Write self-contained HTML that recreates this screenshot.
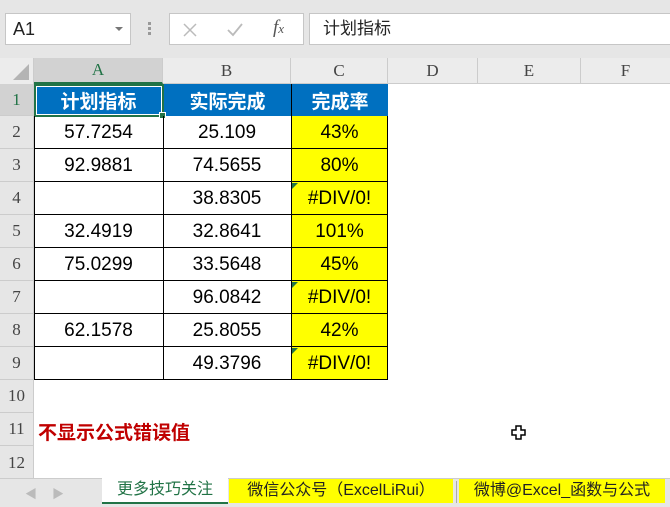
<!DOCTYPE html>
<html><head><meta charset="utf-8"><style>
*{margin:0;padding:0;box-sizing:border-box}
body{width:670px;height:507px;overflow:hidden;background:#fff;position:relative;font-family:"Liberation Sans","Noto Sans CJK SC",sans-serif}
.a{position:absolute}
.top{left:0;top:0;width:670px;height:58px;background:#e6e6e6}
.box{background:#fff;border:1px solid #c6c6c6}
.hdr{background:#e6e6e6;color:#444;font-family:"Liberation Serif","Noto Serif CJK SC",serif;font-size:17px;display:flex;align-items:center;justify-content:center}
.c{display:flex;align-items:center;justify-content:center;font-size:19px;color:#000}
</style></head><body>
<div class="a top"></div>
<div class="a box" style="left:5px;top:13px;width:126px;height:32px;font-size:18px;padding:5px 0 0 7px;color:#222">A1<span class="a" style="right:7px;top:13px;width:0;height:0;border-left:4px solid transparent;border-right:4px solid transparent;border-top:4px solid #777"></span></div>
<div class="a" style="left:148px;top:22px;width:3px;height:3px;background:#999;box-shadow:0 5px #999,0 10px #999"></div>
<div class="a box" style="left:169px;top:13px;width:135px;height:32px">
<svg class="a" style="left:12px;top:8px" width="16" height="16"><path d="M2 2L14 14M14 2L2 14" stroke="#bbb" stroke-width="1.5"/></svg>
<svg class="a" style="left:56px;top:8px" width="18" height="16"><path d="M2 8L7 13L16 2" stroke="#bbb" stroke-width="1.8" fill="none"/></svg>
<span class="a" style="left:103px;top:3px;color:#555;font-family:'Liberation Serif',serif;font-style:italic;font-size:19px">f<span style="font-size:13px">x</span></span></div>
<div class="a box" style="left:309px;top:13px;width:365px;height:32px;font-size:17px;padding:3px 0 0 13px;color:#222;line-height:24px">计划指标</div>

<div class="a" style="left:0;top:58px;width:670px;height:26px;background:#ececec;border-bottom:1px solid #ccc"></div>
<div class="a" style="left:0;top:58px;width:34px;height:26px;background:#ececec;border-right:1px solid #ccc"></div>
<div class="a" style="left:13px;top:64px;width:0;height:0;border-left:16px solid transparent;border-bottom:16px solid #b4b4b4"></div>
<div class="a hdr" style="left:34px;top:58px;width:129px;height:26px;background:#d2d2d2;color:#217346;border-right:1px solid #ccc;border-bottom:2px solid #217346">A</div>
<div class="a hdr" style="left:163px;top:58px;width:128px;height:25px;border-right:1px solid #ccc;background:#ececec">B</div>
<div class="a hdr" style="left:291px;top:58px;width:97px;height:25px;border-right:1px solid #ccc;background:#ececec">C</div>
<div class="a hdr" style="left:388px;top:58px;width:90px;height:25px;border-right:1px solid #ccc;background:#ececec">D</div>
<div class="a hdr" style="left:478px;top:58px;width:103px;height:25px;border-right:1px solid #ccc;background:#ececec">E</div>
<div class="a hdr" style="left:581px;top:58px;width:89px;height:25px;background:#ececec">F</div>

<div class="a" style="left:0;top:84px;width:34px;height:395px;background:#e6e6e6;border-right:1px solid #ccc"></div>
<div class="a hdr" style="left:0;top:84px;width:33px;height:32px;background:#d2d2d2;color:#217346;border-bottom:1px solid #ccc">1</div>
<div class="a hdr" style="left:0;top:116px;width:33px;height:33px;border-bottom:1px solid #ccc">2</div>
<div class="a hdr" style="left:0;top:149px;width:33px;height:33px;border-bottom:1px solid #ccc">3</div>
<div class="a hdr" style="left:0;top:182px;width:33px;height:33px;border-bottom:1px solid #ccc">4</div>
<div class="a hdr" style="left:0;top:215px;width:33px;height:33px;border-bottom:1px solid #ccc">5</div>
<div class="a hdr" style="left:0;top:248px;width:33px;height:33px;border-bottom:1px solid #ccc">6</div>
<div class="a hdr" style="left:0;top:281px;width:33px;height:33px;border-bottom:1px solid #ccc">7</div>
<div class="a hdr" style="left:0;top:314px;width:33px;height:33px;border-bottom:1px solid #ccc">8</div>
<div class="a hdr" style="left:0;top:347px;width:33px;height:33px;border-bottom:1px solid #ccc">9</div>
<div class="a hdr" style="left:0;top:380px;width:33px;height:33px;border-bottom:1px solid #ccc">10</div>
<div class="a hdr" style="left:0;top:413px;width:33px;height:33px;border-bottom:1px solid #ccc">11</div>
<div class="a hdr" style="left:0;top:446px;width:33px;height:33px">12</div>

<div class="a c" style="left:34px;top:84px;width:129px;height:32px;background:#0070c0;color:#fff;font-weight:bold;font-size:19px">计划指标</div>
<div class="a c" style="left:163px;top:84px;width:128px;height:32px;background:#0070c0;color:#fff;font-weight:bold;font-size:19px;border-left:1px solid #000">实际完成</div>
<div class="a c" style="left:291px;top:84px;width:97px;height:32px;background:#0070c0;color:#fff;font-weight:bold;font-size:19px;border-left:1px solid #000">完成率</div>
<div class="a" style="left:34px;top:84px;width:130px;height:33px;border:2px solid #217346;outline:1px solid #fff;outline-offset:-3px"></div>
<div class="a" style="left:159px;top:112px;width:7px;height:7px;background:#217346;border:1px solid #fff"></div>

<div class="a" style="left:291px;top:116px;width:97px;height:264px;background:#ff0"></div>
<div class="a" style="left:34px;top:116px;width:354px;height:264px;
background:
linear-gradient(#000,#000) 128px 0/1px 100% no-repeat,
linear-gradient(#000,#000) 256px 0/1px 100% no-repeat,
repeating-linear-gradient(to bottom,transparent 0 32px,#000 32px 33px);
border-left:1px solid #000;border-right:1px solid #000"></div>

<div class="a" style="left:34px;top:116px;width:354px;font-size:19px">
<div style="display:grid;grid-template-columns:129px 128px 97px;grid-auto-rows:33px;text-align:center;line-height:33px">
<div>57.7254</div><div>25.109</div><div>43%</div>
<div>92.9881</div><div>74.5655</div><div>80%</div>
<div></div><div>38.8305</div><div>#DIV/0!</div>
<div>32.4919</div><div>32.8641</div><div>101%</div>
<div>75.0299</div><div>33.5648</div><div>45%</div>
<div></div><div>96.0842</div><div>#DIV/0!</div>
<div>62.1578</div><div>25.8055</div><div>42%</div>
<div></div><div>49.3796</div><div>#DIV/0!</div>
</div></div>
<div class="a" style="left:292px;top:183px;width:0;height:0;border-top:6px solid #217346;border-right:6px solid transparent"></div>
<div class="a" style="left:292px;top:282px;width:0;height:0;border-top:6px solid #217346;border-right:6px solid transparent"></div>
<div class="a" style="left:292px;top:348px;width:0;height:0;border-top:6px solid #217346;border-right:6px solid transparent"></div>

<div class="a" style="left:38px;top:418px;font-size:19px;font-weight:bold;color:#c00000">不显示公式错误值</div>
<svg class="a" style="left:511px;top:425px" width="15" height="15"><path d="M5 1H10V5H14V10H10V14H5V10H1V5H5Z" fill="#fff" stroke="#000" stroke-width="1.5"/></svg>

<div class="a" style="left:0;top:478px;width:670px;height:29px;background:#e6e6e6;border-top:1px solid #ccc"></div>
<div class="a" style="left:25px;top:485px;color:#bbb;font-size:12px">◀</div>
<div class="a" style="left:52px;top:485px;color:#bbb;font-size:12px">▶</div>
<div class="a" style="left:102px;top:478px;width:126px;height:26px;background:#fff;border-bottom:2px solid #217346;color:#217346;font-size:16px;text-align:center;line-height:24px">更多技巧关注</div>
<div class="a" style="left:229px;top:479px;width:224px;height:24px;background:#ff0;font-size:16px;text-align:center;line-height:24px;color:#222">微信公众号（ExcelLiRui）</div>
<div class="a" style="left:456px;top:481px;width:1px;height:22px;background:#aaa"></div>
<div class="a" style="left:459px;top:479px;width:206px;height:24px;background:#ff0;font-size:16px;text-align:center;line-height:24px;color:#222">微博@Excel_函数与公式</div>
</body></html>
